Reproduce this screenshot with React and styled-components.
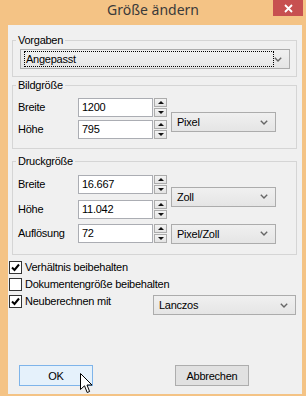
import React from 'react';
import styled, { createGlobalStyle } from 'styled-components';

const GlobalStyle = createGlobalStyle`
  html, body {
    margin: 0;
    padding: 0;
  }
  body {
    width: 306px;
    height: 396px;
    overflow: hidden;
  }
`;

const Window = styled.div`
  position: relative;
  width: 306px;
  height: 396px;
  box-sizing: border-box;
  background: #f4c385;
  display: flex;
  flex-direction: column;
  padding: 0 4px 2px 8px;
`;

const TitleBar = styled.div`
  position: relative;
  height: 25px;
  margin: 0 -4px 0 -8px;
  display: flex;
  justify-content: center;
  font-family: "Noto Sans", "Open Sans", sans-serif;
  font-size: 14px;
  line-height: 19px;
  color: #3a3a3a;
`;

const CloseButton = styled.div`
  position: absolute;
  top: 0;
  right: 3px;
  width: 30px;
  height: 16px;
  background: #c75050;
  display: flex;
  align-items: center;
  justify-content: center;
`;

const Client = styled.div`
  flex: 1;
  background: #f0f0f0;
  display: flex;
  flex-direction: column;
  padding: 9px 0 8px 0;
  font-family: "Liberation Sans", Arial, sans-serif;
  font-size: 11px;
  letter-spacing: -0.25px;
  color: #000;
`;

const Group = styled.fieldset`
  margin: ${p => p.$top}px 0 0 4px;
  padding: 0;
  width: 285px;
  min-width: 0;
  box-sizing: border-box;
  border: 1px solid #d5d5d5;
`;

const Legend = styled.legend`
  margin-left: 3px;
  padding: 0 2px;
  line-height: 13px;
`;

const GroupBody = styled.div`
  padding: ${p => p.$pad};
`;

const FieldGrid = styled.div`
  display: grid;
  grid-template-columns: 60px 76px 17px 105px;
  grid-auto-rows: 19px;
  row-gap: ${p => p.$gap}px;
`;

const Label = styled.span`
  align-self: center;
  line-height: 13px;
`;

const Input = styled.div`
  width: 75px;
  height: 19px;
  box-sizing: border-box;
  border: 1px solid #abadb3;
  background: #fff;
  padding: 0 3px;
  line-height: 17px;
`;

const Spinner = styled.div`
  width: 13px;
  height: 19px;
  display: flex;
  flex-direction: column;
  gap: 1px;
`;

const SpinButton = styled.div`
  flex: 1;
  box-sizing: border-box;
  border: 1px solid #acacac;
  background: linear-gradient(#f3f3f3, #e3e3e3);
  display: flex;
  align-items: center;
  justify-content: center;
`;

const Arrow = styled.div`
  width: 0;
  height: 0;
  border-left: 3px solid transparent;
  border-right: 3px solid transparent;
  ${p => (p.$up ? 'border-bottom: 3px solid #111;' : 'border-top: 3px solid #111;')}
`;

const Combo = styled.div`
  width: ${p => p.$w}px;
  height: 20px;
  box-sizing: border-box;
  border: 1px solid #acacac;
  background: linear-gradient(#f0f0f0, #e5e5e5);
  display: flex;
  align-items: center;
  padding: 0 7px 0 3px;
  grid-column: ${p => p.$col || 'auto'};
  grid-row: ${p => p.$row || 'auto'};
  align-self: ${p => p.$align || 'center'};
  margin-bottom: ${p => p.$mb || 0}px;
`;

const ComboText = styled.div`
  flex: 1;
  height: 16px;
  box-sizing: border-box;
  line-height: 14px;
  padding: 0 1px;
  border: 1px ${p => (p.$focus ? 'dotted #000' : 'solid transparent')};
`;

const CheckList = styled.div`
  margin-top: 4px;
  display: flex;
  flex-direction: column;
`;

const CheckRow = styled.div`
  display: flex;
  align-items: flex-start;
  padding: 2px 6px 2px 1px;
`;

const Box = styled.div`
  width: 13px;
  height: 13px;
  box-sizing: border-box;
  border: 1px solid #333;
  background: #fff;
  display: flex;
  align-items: center;
  justify-content: center;
`;

const CheckText = styled.span`
  flex: 1;
  margin-left: 3px;
  line-height: 13px;
`;

const ButtonRow = styled.div`
  margin-top: auto;
  display: flex;
  gap: 82px;
  padding-left: 11px;
`;

const Button = styled.div`
  width: 74px;
  height: 21px;
  box-sizing: border-box;
  border: 1px solid ${p => (p.$hot ? '#7eb4ea' : '#adadad')};
  background: ${p => (p.$hot ? '#e5f1fb' : '#e1e1e1')};
  display: flex;
  align-items: center;
  justify-content: center;
`;

const Cursor = styled.svg`
  position: absolute;
  left: 80px;
  top: 373px;
`;

function Chevron() {
  return (
    <svg width="8" height="5" viewBox="0 0 8 5">
      <path d="M0.8 0.8 L4 4 L7.2 0.8" fill="none" stroke="#666" strokeWidth="1.4" />
    </svg>
  );
}

function Dropdown({ text, width, focus, ...rest }) {
  return (
    <Combo $w={width} {...rest}>
      <ComboText $focus={focus}>{text}</ComboText>
      <Chevron />
    </Combo>
  );
}

function Spin() {
  return (
    <Spinner>
      <SpinButton><Arrow $up /></SpinButton>
      <SpinButton><Arrow /></SpinButton>
    </Spinner>
  );
}

function Check({ checked }) {
  return (
    <Box>
      {checked && (
        <svg width="9" height="9" viewBox="0 0 9 9">
          <path d="M1 4.5 L3.5 7 L8 1.5" fill="none" stroke="#000" strokeWidth="2" />
        </svg>
      )}
    </Box>
  );
}

function Field({ label, value }) {
  return (
    <>
      <Label>{label}</Label>
      <Input>{value}</Input>
      <Spin />
    </>
  );
}

export default function App() {
  return (
    <>
      <GlobalStyle />
      <Window>
        <TitleBar>
          Größe ändern
          <CloseButton>
            <svg width="9" height="9" viewBox="0 0 9 9">
              <path d="M1 1 L8 8 M8 1 L1 8" stroke="#fff" strokeWidth="1.8" />
            </svg>
          </CloseButton>
        </TitleBar>
        <Client>
          <Group $top={0}>
            <Legend>Vorgaben</Legend>
            <GroupBody $pad="2px 0 7px 7px">
              <Dropdown text="Angepasst" width={270} focus />
            </GroupBody>
          </Group>

          <Group $top={2}>
            <Legend>Bildgröße</Legend>
            <GroupBody $pad="6px 0 9px 5px">
              <FieldGrid $gap={3}>
                <Field label="Breite" value="1200" />
                <Dropdown text="Pixel" width={105} $col={4} $row="1 / span 2" $align="end" $mb={7} />
                <Field label="Höhe" value="795" />
              </FieldGrid>
            </GroupBody>
          </Group>

          <Group $top={6}>
            <Legend>Druckgröße</Legend>
            <GroupBody $pad="7px 0 11px 5px">
              <FieldGrid $gap={5.5}>
                <Field label="Breite" value="16.667" />
                <Dropdown text="Zoll" width={105} $col={4} $row="1 / span 2" />
                <Field label="Höhe" value="11.042" />
                <Field label="Auflösung" value="72" />
                <Dropdown text="Pixel/Zoll" width={105} $col={4} $row="3" />
              </FieldGrid>
            </GroupBody>
          </Group>

          <CheckList>
            <CheckRow>
              <Check checked />
              <CheckText>Verhältnis beibehalten</CheckText>
            </CheckRow>
            <CheckRow>
              <Check />
              <CheckText>Dokumentengröße beibehalten</CheckText>
            </CheckRow>
            <CheckRow>
              <Check checked />
              <CheckText>Neuberechnen mit</CheckText>
              <Dropdown text="Lanczos" width={143} />
            </CheckRow>
          </CheckList>

          <ButtonRow>
            <Button $hot>OK</Button>
            <Button>Abbrechen</Button>
          </ButtonRow>
        </Client>
        <Cursor width="13" height="21" viewBox="0 0 13 21">
          <path
            d="M0.5 0.5 L0.5 16.5 L4.5 12.8 L7.2 19.5 L9.6 18.5 L7 12 L12 12 Z"
            fill="#fff"
            stroke="#000"
            strokeWidth="1"
            strokeLinejoin="round"
          />
        </Cursor>
      </Window>
    </>
  );
}
